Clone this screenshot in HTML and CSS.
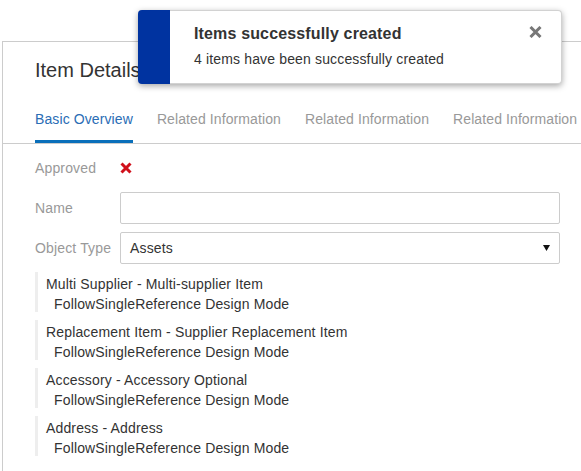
FILE: index.html
```html
<!DOCTYPE html>
<html>
<head>
<meta charset="utf-8">
<link rel="stylesheet" href="styles.css">
</head>
<body>
<div class="panel">
  <h1 class="title">Item Details</h1>
  <div class="tabs">
    <div class="tab active">Basic Overview</div>
    <div class="tab">Related Information</div>
    <div class="tab">Related Information</div>
    <div class="tab">Related Information</div>
  </div>
  <div class="form">
    <div class="row">
      <div class="label">Approved</div>
      <svg class="cross" width="12" height="12" viewBox="0 0 12 12"><path d="M1.5 1.5 L10.5 10.5 M10.5 1.5 L1.5 10.5" stroke="#d0101b" stroke-width="3" fill="none"/></svg>
    </div>
    <div class="row">
      <div class="label">Name</div>
      <div class="input"></div>
    </div>
    <div class="row">
      <div class="label">Object Type</div>
      <div class="input select">
        <span>Assets</span>
        <svg class="arrow" width="7" height="6" viewBox="0 0 7 6"><path d="M0 0 H7 L3.5 6 Z" fill="#111"/></svg>
      </div>
    </div>
    <div class="list">
      <div class="item"><div>Multi Supplier - Multi-supplier Item</div><div class="sub">FollowSingleReference Design Mode</div></div>
      <div class="item"><div>Replacement Item - Supplier Replacement Item</div><div class="sub">FollowSingleReference Design Mode</div></div>
      <div class="item"><div>Accessory - Accessory Optional</div><div class="sub">FollowSingleReference Design Mode</div></div>
      <div class="item"><div>Address - Address</div><div class="sub">FollowSingleReference Design Mode</div></div>
    </div>
  </div>
</div>
<div class="toast">
  <div class="strip"></div>
  <div class="toast-body">
    <div class="toast-title">Items successfully created</div>
    <div class="toast-text">4 items have been successfully created</div>
  </div>
  <svg class="close" width="13" height="12" viewBox="0 0 13 12"><path d="M1.5 1 L11.5 11 M11.5 1 L1.5 11" stroke="#777" stroke-width="3" fill="none"/></svg>
</div>
</body>
</html>
```
FILE: styles.css
```css
html, body {
  margin: 0;
  padding: 0;
  background: #fff;
  overflow: hidden;
}
body {
  font-family: "Liberation Sans", Arial, sans-serif;
  font-size: 14px;
  letter-spacing: 0.15px;
  color: #333;
  width: 581px;
  height: 471px;
  position: relative;
}
.panel {
  margin: 41px 0 0 2px;
  width: 579px;
  height: 429px;
  overflow: hidden;
  border-top: 1px solid #ccc;
  border-left: 1px solid #ccc;
}
.title {
  margin: 0;
  padding: 16px 0 0 32px;
  font-size: 20px;
  line-height: 24px;
  font-weight: normal;
  letter-spacing: 0;
  color: #333;
}
.tabs {
  display: flex;
  gap: 24px;
  margin-top: 27px;
  padding-left: 32px;
  border-bottom: 1px solid #ccc;
  white-space: nowrap;
  letter-spacing: 0.1px;
}
.tab {
  flex: none;
  line-height: 20px;
  padding-bottom: 11px;
  border-bottom: 3px solid transparent;
  color: #999;
}
.tab.active {
  color: #2a6db5;
  border-bottom-color: #0a6fba;
}
.form {
  padding: 8px 0 0 32px;
  width: 525px;
}
.row {
  display: flex;
  align-items: center;
  height: 32px;
  margin-bottom: 8px;
}
.label {
  width: 85px;
  color: #999;
  flex: none;
}
.input {
  box-sizing: border-box;
  width: 440px;
  height: 32px;
  border: 1px solid #ccc;
  border-radius: 2px;
}
.select {
  display: flex;
  align-items: center;
  justify-content: space-between;
  padding: 0 9px 0 9px;
  color: #333;
}
.list {
  display: flex;
  flex-direction: column;
  gap: 8px;
}
.item {
  box-sizing: border-box;
  height: 40px;
  padding: 2px 0 0 8px;
  border-left: 3px solid #eee;
  line-height: 20px;
  white-space: nowrap;
}
.sub {
  padding-left: 8px;
}
.toast {
  position: absolute;
  left: 138px;
  top: 10px;
  width: 424px;
  height: 74px;
  box-sizing: border-box;
  display: flex;
  background: #fff;
  border: 1px solid #d2d2d2;
  border-left: none;
  border-radius: 4px;
  box-shadow: 0 2px 6px rgba(0, 0, 0, 0.35);
}
.strip {
  width: 32px;
  margin: -1px 0;
  background: #0033a0;
  border-radius: 4px 0 0 4px;
  flex: none;
}
.toast-body {
  padding: 13px 0 0 24px;
}
.toast-title {
  font-size: 16px;
  font-weight: bold;
  line-height: 20px;
  color: #333;
}
.toast-text {
  margin-top: 5px;
  line-height: 20px;
  color: #333;
}
.close {
  position: absolute;
  top: 15px;
  right: 19px;
}
```
